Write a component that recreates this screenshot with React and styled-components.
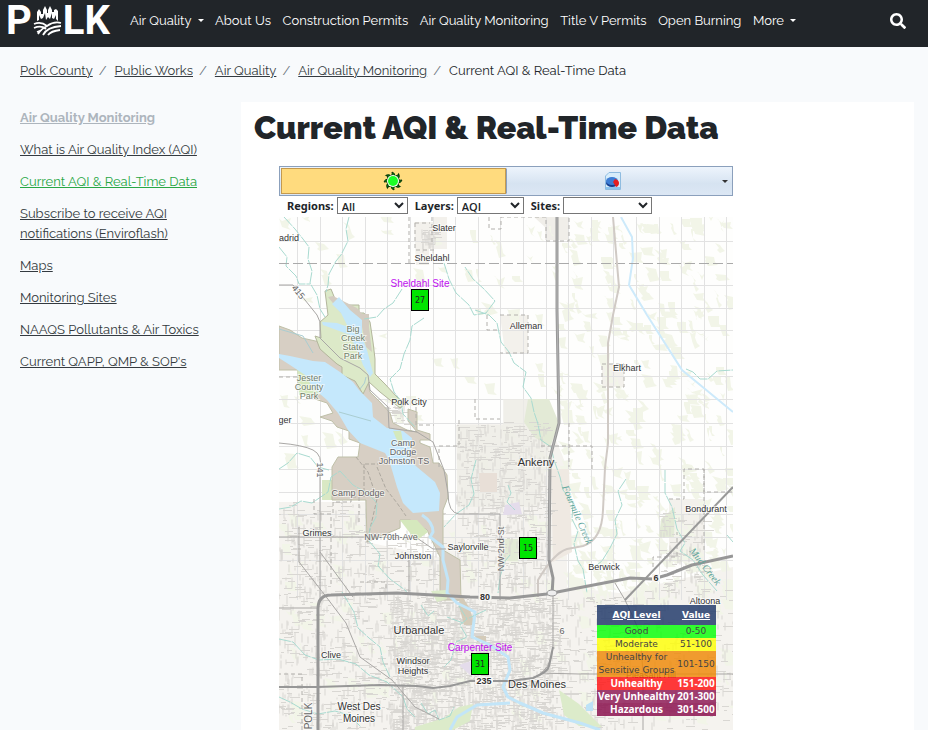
import { useState } from "react";
import styled, { createGlobalStyle } from "styled-components";
import { FaSearch } from "react-icons/fa";

const navItems = [
  { name: "Air Quality", menu: true },
  { name: "About Us" },
  { name: "Construction Permits" },
  { name: "Air Quality Monitoring" },
  { name: "Title V Permits" },
  { name: "Open Burning" },
  { name: "More", menu: true },
];

const crumbs = ["Polk County", "Public Works", "Air Quality", "Air Quality Monitoring"];

const sideLinks = [
  { name: "Air Quality Monitoring", type: "parent" },
  { name: "What is Air Quality Index (AQI)" },
  { name: "Current AQI & Real-Time Data", type: "active" },
  { name: "Subscribe to receive AQI notifications (Enviroflash)" },
  { name: "Maps" },
  { name: "Monitoring Sites" },
  { name: "NAAQS Pollutants & Air Toxics" },
  { name: "Current QAPP, QMP & SOP's" },
];

const sites = [
  { value: 27, name: "Sheldahl Site", x: 132, y: 72 },
  { value: 15, x: 240, y: 320 },
  { value: 31, name: "Carpenter Site", x: 192, y: 436 },
];

const levels = [
  { name: "Good", value: "0-50", bg: "rgba(0, 255, 0, 0.8)" },
  { name: "Moderate", value: "51-100", bg: "rgba(255, 255, 0, 0.8)" },
  { name: "Unhealthy for\nSensitive Groups", value: "101-150", bg: "rgba(238, 138, 10, 0.84)" },
  { name: "Unhealthy", value: "151-200", bg: "rgba(255, 20, 20, 0.84)", light: true },
  { name: "Very Unhealthy", value: "201-300", bg: "rgba(143, 30, 90, 0.86)", light: true },
  { name: "Hazardous", value: "301-500", bg: "rgba(140, 20, 80, 0.86)", light: true },
];

const places = [
  { text: "Slater", x: 165, y: 14 },
  { text: "adrid", x: 10, y: 24 },
  { text: "Sheldahl", x: 153, y: 44 },
  { text: "Alleman", x: 247, y: 112 },
  { text: "Elkhart", x: 348, y: 154 },
  { text: "Polk City", x: 130, y: 188 },
  { text: "ger", x: 6, y: 206 },
  { text: "Big", x: 74, y: 115, park: true },
  { text: "Creek", x: 74, y: 124, park: true },
  { text: "State", x: 74, y: 133, park: true },
  { text: "Park", x: 74, y: 142, park: true },
  { text: "Jester", x: 30, y: 164, park: true },
  { text: "County", x: 30, y: 173, park: true },
  { text: "Park", x: 30, y: 182, park: true },
  { text: "Camp", x: 124, y: 229, muted: true },
  { text: "Dodge", x: 124, y: 238, muted: true },
  { text: "Johnston TS", x: 125, y: 247, muted: true },
  { text: "Camp Dodge", x: 79, y: 279, muted: true },
  { text: "Ankeny", x: 257, y: 249, size: 11 },
  { text: "Bondurant", x: 427, y: 295 },
  { text: "Grimes", x: 38, y: 319 },
  { text: "NW-70th-Ave", x: 112, y: 323, muted: true },
  { text: "Saylorville", x: 189, y: 333 },
  { text: "Johnston", x: 134, y: 342 },
  { text: "Berwick", x: 325, y: 353 },
  { text: "Altoona", x: 426, y: 387 },
  { text: "Urbandale", x: 140, y: 417, size: 11 },
  { text: "Clive", x: 52, y: 441 },
  { text: "Windsor", x: 134, y: 447 },
  { text: "Heights", x: 134, y: 457 },
  { text: "Des Moines", x: 258, y: 471, size: 11 },
  { text: "West Des", x: 80, y: 493, size: 10 },
  { text: "Moines", x: 80, y: 505, size: 10 },
  { text: "Pleasant Hill", x: 372, y: 461 },
];

const creeks = [
  "M5 0 16 12 24 22 30 30 29 42 33 54 31 66 38 78 41 92 46 100",
  "M0 30 8 40 7 49 17 59 20 67 31 67",
  "M70 0 67 12 69 24 62 38 57 44 50 57 49 68 47 75",
  "M165 46 170 62 177 76 190 88 195 98 207 96 216 84 205 72 194 62 186 50",
  "M123 72 114 86 105 92 98 100 85 102",
  "M145 101 133 109 131 123 125 137 121 152 111 162 115 175 122 184 124 197 136 210",
  "M196 93 210 98 218 106 222 125 230 135 235 146 247 155 244 170 252 181 255 195 259 207 262 223 272 230 275 243 281 260 284 273 294 286 293 302 299 314 295 327 299 344 304 352 308 376",
  "M0 292 12 290 22 284 33 286 49 275 52 260 61 254 74 268 88 276 98 286 97 300 91 311 90 324 101 337 99 349 111 362 126 373 130 378",
  "M0 252 9 246 18 236 31 240 39 250 50 253",
  "M347 262 339 274 343 288 336 303 338 317 331 331 323 344 314 351",
  "M386 253 386 276 393 290 398 312 406 326 401 334 414 343 424 358 438 374",
  "M407 152 414 155 421 162 429 162 438 154 454 153",
  "M0 422 14 425 26 438 40 443 59 442 77 447 90 458 108 465 124 480 128 492 136 500",
  "M63 375 75 395 79 411 90 421 101 430 104 445 111 460",
  "M197 243 192 262 195 277 190 288 177 297 165 310",
  "M180 389 188 402 181 408 188 420 177 425 172 443 165 450",
  "M142 388 149 399 155 394 M207 393 190 401 M184 406 168 400",
  "M142 486 149 497 156 493 160 503 171 499 175 490",
  "M229 268 232 276 228 285 236 293 M448 318 454 325",
  "M231 338 226 344 221 360 219 376",
  "M0 480 11 485 23 492 39 497 56 494 70 498 82 510",
];

const roads = [
  "M0 226Q24 228 34 233T41 253V383",
  "M0 68H14L38 98 41 105V121L61 141 81 151 89 158 91 173 109 190 110 211 138 215 154 225 165 253 169 276Q169 296 180 297H221V383",
  "M0 320H88L138 321 154 332H167",
  "M130 343V376 M124 468V513",
  "M454 270 346 383 336 366",
  "M346 383 354 400 361 416 364 456V513",
  "M261 456 300 457H454",
  "M274 373V430Q273 453 254 461",
  "M0 391H39 M41 335 74 380",
  "M20 310V345L45 377 67 406 81 440 113 463 136 490 160 502",
];

// small linear generator so the street and field texture stays the same on every render
const makeRandom = (seed) => () => {
  seed = (seed * 16807) % 2147483647;
  return seed / 2147483647;
};

const makeStreets = (seed, [x, y, w, h], count) => {
  const rand = makeRandom(seed);
  let d = "";
  for (let i = 0; i < count; i++) {
    const px = Math.round(x + rand() * w);
    const py = Math.round(y + rand() * h);
    const length = Math.round(2 + rand() * 9);
    d += `M${px} ${py + 0.5}${rand() > 0.5 ? "h" : "v"}${length}`;
  }
  return d;
};

const makeFields = (seed, [x, y, w, h], count) => {
  const rand = makeRandom(seed);
  let d = "";
  for (let i = 0; i < count; i++) {
    const px = Math.round(x + rand() * w);
    const py = Math.round(y + rand() * h);
    const a = Math.round(2 + rand() * 10);
    const b = Math.round(2 + rand() * 9);
    const c = Math.round(rand() * 6 - 3);
    d += `M${px} ${py}l${a} ${c} ${c} ${b} 3 3-${a} ${c}-3-${b} ${c}-2z`;
  }
  return d;
};

const fields =
  makeFields(77, [275, 0, 174, 390], 330) + makeFields(19, [0, 0, 270, 240], 60) + makeFields(31, [0, 290, 454, 213], 170);

const streets = [
  makeStreets(11, [178, 205, 92, 165], 700),
  makeStreets(42, [110, 380, 165, 133], 2100),
  makeStreets(8, [0, 285, 160, 228], 1200),
  makeStreets(93, [275, 380, 80, 133], 320),
  makeStreets(54, [380, 290, 45, 85], 140),
  makeStreets(29, [95, 185, 30, 28], 60),
  makeStreets(67, [142, 10, 14, 18], 45),
  makeStreets(71, [350, 370, 104, 143], 200),
].join("");

const columns = Array.from({ length: 20 }, (_, i) => Math.round(18 + i * 22.6));
const rows = [24, 68, 91, 113, 136, 159, 182, 206, 229, 252, 275, 297, 320, 343];

const MapDrawing = () => (
  <MapSvg viewBox="0 0 454 513" preserveAspectRatio="xMinYMin slice" aria-hidden="true">
    <rect width="454" height="513" fill="#fefefd" />
    <path
      d="M178 206H225V182H270V206L288 250V370L340 376 454 350V513H0V285H87V325L160 340V303H178Z"
      fill="#f5f3ef"
    />
    <path d="M135 5H155V0H168V32H150V48H137Z M221 98H249V136H226Z M323 147H345V170H323Z M390 282H425V345H390Z" fill="#f3f1ec" />
    <path d="M255 0H290V23H266V10Z" fill="#f0eee9" />
    <path d={fields} fill="#f2f5e8" />
    <path
      d={columns.map((x) => `M${x}.5 0V383`).join("") + rows.map((y) => `M0 ${y}.5H454`).join("")}
      stroke="#e2e2e2"
      fill="none"
    />
    <path d="M177 208H224V182H270V232L260 290H178Z" fill="#eeece7" opacity=".7" />
    <path d="M272 252H290L293 335 274 345Z" fill="#efe9e2" />
    <path d="M249 182H270L280 206 271 230 255 220 245 205Z M221 322H239V344H221Z M382 302 396 290 395 320H380Z" fill="#e3ead6" />
    <path d="M43 263H53V283H43Z M118 213H133V225H124Z" fill="#d9e8c4" />
    <path d={streets} stroke="#d9d7d3" fill="none" />
    <path d="M200 256H218V275H201Z" fill="#e8dfd7" />
    <path d="M226 288 240 285 243 297 224 298Z M180 448 195 443 191 458Z" fill="#e4dceb" />

    {/* park land and reservoir */}
    <path
      d="M0 109 11 113 23 121 41 125 53 138 68 148 78 153 89 165 91 175 101 185 111 196 114 206 128 213 138 215 129 204V192L138 195V213L151 217V223H141L141 226 151 230 154 246 160 246 168 258 169 280 164 293V333L181 343 182 383H161V340L148 313 131 303H121V311L88 325 87 283H53V250L59 240H79L81 226 70 222V214L58 210 53 204 41 200 54 196 48 186 36 182 31 176 19 166V153H0Z"
      fill="#d7cfc4"
      stroke="#bfc0a8"
    />
    <path
      d="M46 74 52 72 56 82 70 88H80V96H85L91 105 94 125 96 142V157L106 167 118 180 126 187 121 191 101 175 90 165 84 177 76 164 63 158V150L58 147 41 132 36 119 42 121 41 105 49 98Z"
      fill="#dce9c8"
      stroke="#b3b69c"
    />
    <path d="M18 147 35 155 55 176 34 178 20 178Z M121 303 138 303 149 315 137 324Z" fill="#d5e8bd" />
    <path d="M78 91 83 97H90V110L93 135 87 130 83 110 72 100 62 96 49 80 54 79Z" fill="#d4ccc1" />
    <path d="M53 87 60 80 71 93 83 103V120L88 133 94 156 91 160 84 148 81 140 71 118 44 108 43 105 58 106 69 110 62 96Z" fill="#c4e7fb" />
    <path
      d="M0 137 11 139 34 144 46 145 61 155 74 165 80 173 93 186 94 200 108 211 124 214 133 221 131 243 138 250 156 265 161 276 160 294 134 296 124 286 118 270 113 253 110 243 106 236 81 226 69 213 59 196 48 183 34 171 26 158 11 148 0 141Z"
      fill="#c5e8fc"
    />
    <path d="M114 214H122L124 225 120 228Z" fill="#d4e9bd" />
    <path d="M81 172Q87 166 87 160 M60 195 92 204 M0 112 24 119 34 136" stroke="#aacdd1" fill="none" />
    <path d="M86 247H99M85 247V280M98 250 107 272 118 286 127 299 M77 240 89 255 98 282 88 325" stroke="#ada89f" fill="none" strokeDasharray="4 2" />
    <path d="M181 376 190 390 196 408H185L180 389Z M196 419H207V425H198Z" fill="#d4cbb9" />
    <path d="M152 374 167 373 168 382 158 385Z M136 510 165 501 180 490 194 487 191 504 174 513H136Z" fill="#dcebca" />
    <path d="M280 473 300 487 323 510 300 509 285 498Z" fill="#dcebca" />
    <path
      d="M143 298Q154 305 154 315L151 320 164 330V343L169 363 168 376 178 386 196 395 193 420 211 428 229 440 231 453 224 470 229 480 241 486 264 496 301 506 321 513 M171 513 178 500 198 488 231 486"
      stroke="#c2e5f8"
      strokeWidth="3"
      fill="none"
      strokeLinejoin="round"
    />
    <path d="M342 0 353 20 354 41 350 68 368 98 403 153 454 195" stroke="#cdeafb" strokeWidth="2" fill="none" />
    <path d="M307 488 314 484V494H307Z" fill="#bde2f6" />
    {creeks.map((d) => (
      <path key={d} d={d} stroke="#a8dad0" fill="none" strokeLinejoin="round" strokeDasharray="12 1" />
    ))}

    {/* county and city limits */}
    <path d="M0 46.5H454" stroke="#aaa" strokeDasharray="10 4" />
    <path
      d="M130 0V46 M136 6H151M136 6V33H158 M153 25V0 M210 0V12H222V0H267V24H290V0 M221 98H249V136H221 M323 147H345V170H323Z M137 183V208H155M180 203V229H160V250 M290 206V250M262 229H313V252M425 252V336M390 282H405V252H425V275H454 M35 282V297H54V285H72V280H80V305M52 300V370M81 365H107V373M374 350V340H398V315M23 513V457H0 M208 98V113H221 M196 182V202H221 M0 160H20"
      stroke="#b2b0ac"
      strokeDasharray="4 3"
      fill="none"
    />

    {roads.map((d) => (
      <path key={d} d={d} stroke="#a9a7a5" fill="none" strokeLinejoin="round" />
    ))}
    <path
      d="M334 0 340 70 334 98 329 126V226L326 251 324 293Q323 323 304 329L288 332Q275 336 259 363V380"
      stroke="#d0cac5"
      strokeWidth="2"
      fill="none"
    />
    <path d="M454 270 346 383" stroke="#999" strokeWidth="2" />
    <path
      d="M278 0V93L280 206 271 241 270 343 274 361 273 378 M39 513V392Q39 378 52 378L118 376 191 380 231 381 268 377 304 370 351 361 374 362 388 358 413 348 454 339"
      stroke="#979797"
      strokeWidth="3"
      fill="none"
      strokeLinejoin="round"
    />
    <path
      d="M0 470H38L101 468 138 469 154 471 171 469 191 464H231L254 461Q269 455 270 449L274 430"
      stroke="#979797"
      strokeWidth="2"
      fill="none"
    />
    <path d="M278 0V93L280 206 271 241 270 343" stroke="#b3b3b3" fill="none" />
    <ellipse cx="273" cy="376" rx="5" ry="3" fill="#eee" stroke="#979797" />

    {[
      ["80", 206, 380, 13],
      ["235", 205, 464, 18],
      ["6", 377, 361, 8],
    ].map(([text, x, y, w]) => (
      <g key={text}>
        <rect x={x - w / 2} y={y - 4} width={w} height="8" fill="#f5f3ef" />
        <Place x={x} y={y + 3} $bold>
          {text}
        </Place>
      </g>
    ))}
    <Place x="283" y="417" $muted>6</Place>
    {places.map((place) => (
      <Place key={place.text + place.y} x={place.x} y={place.y} $size={place.size} $park={place.park} $muted={place.muted}>
        {place.text}
      </Place>
    ))}
    <Place x="0" y="0" transform="translate(17 77) rotate(50)" $muted>415</Place>
    <Place x="0" y="0" transform="translate(38 253) rotate(90)" $muted>141</Place>
    <Place x="0" y="0" transform="translate(225 332) rotate(-90)" $muted>NW-2nd-St</Place>
    <Place x="0" y="0" transform="translate(33 499) rotate(-90)" $size={10} $muted>POLK</Place>
    <Creek transform="translate(283 270) rotate(67)">Fourmile Creek</Creek>
    <Creek transform="translate(410 334) rotate(52)">Mud Creek</Creek>
  </MapSvg>
);

const Logo = () => (
  <LogoLink href="#home" aria-label="Polk County home">
    <span>P</span>
    <svg width="31" height="30" viewBox="0 0 31 30" aria-hidden="true">
      <path
        d="M5 15V6L7 3 9 6V8H11V4L13 0 15 4V7H16V4L18 0 20 4V6H22V4L24 3 26 5V15L24 13V9L22 13 20 12V7L18 13 16 11 14 14 13 7 11 12 9 13 7 9V14Z"
        fill="#fff"
      />
      <path
        d="M2 18Q9 15 15 20 22 15 29 17 M2 22Q9 19 14 23 M5 26 10 24 M15 20Q9 23 6 28 M29 20Q15 21 11 29 M28 24Q19 25 16 29"
        fill="none"
        stroke="#fff"
        strokeWidth="1.8"
      />
    </svg>
    <span>LK</span>
  </LogoLink>
);

const SunIcon = () => (
  <svg width="20" height="20" viewBox="0 0 20 20" aria-hidden="true">
    {[0, 45, 90, 135, 180, 225, 270, 315].map((angle) => (
      <path key={angle} d="M8 5Q10 3 9 1 12 2 12 5z" fill="#087a12" stroke="#063507" transform={`rotate(${angle} 10 10)`} />
    ))}
    <circle cx="10" cy="10" r="6" fill="#fff" />
    <circle cx="10" cy="10" r="5" fill="#1cff25" />
  </svg>
);

const ChartIcon = () => (
  <svg width="16" height="18" viewBox="0 0 16 18" aria-hidden="true">
    <path d="M4 0.5H15.5V17.5H0.5V4Z" fill="#d7edfb" stroke="#8fbce0" />
    <path d="M1 15H15V17H1Z" fill="#8cc4ee" />
    <ellipse cx="7" cy="11" rx="6" ry="4" fill="#153f91" />
    <ellipse cx="7" cy="9" rx="6" ry="4" fill="#3d7dd5" />
    <path d="M8 10 10 7Q14 8 14 11T11 15Z" fill="#e41d20" />
  </svg>
);

const App = () => {
  const [region, setRegion] = useState("All");
  const [layer, setLayer] = useState("AQI");
  const [site, setSite] = useState("");

  return (
    <Page>
      <GlobalStyle />
      <Header>
        <Logo />
        <Nav aria-label="Main">
          {navItems.map((item) => (
            <NavLink key={item.name} href="#nav">
              {item.name}
              {item.menu && <Caret />}
            </NavLink>
          ))}
        </Nav>
        <SearchButton aria-label="Search">
          <FaSearch size={16} />
        </SearchButton>
      </Header>

      <Breadcrumb aria-label="Breadcrumb">
        {crumbs.map((name) => (
          <li key={name}>
            <a href="#crumb">{name}</a>
          </li>
        ))}
        <li>Current AQI &amp; Real-Time Data</li>
      </Breadcrumb>

      <Columns>
        <Sidebar>
          {sideLinks.map((link) => (
            <SideLink key={link.name} href="#side" $type={link.type}>
              {link.name}
            </SideLink>
          ))}
        </Sidebar>

        <Content>
          <Title>Current AQI &amp; Real-Time Data</Title>
          <Widget>
            <Toolbar>
              <ToolButton $active aria-label="Current AQI">
                <SunIcon />
              </ToolButton>
              <ToolButton aria-label="Charts">
                <ChartIcon />
                <MenuArrow />
              </ToolButton>
            </Toolbar>
            <Filters>
              <label htmlFor="regions">Regions:</label>
              <Select id="regions" $width={71} value={region} onChange={(e) => setRegion(e.target.value)}>
                <option>All</option>
              </Select>
              <label htmlFor="layers">Layers:</label>
              <Select id="layers" $width={67} value={layer} onChange={(e) => setLayer(e.target.value)}>
                <option>AQI</option>
              </Select>
              <label htmlFor="sites">Sites:</label>
              <Select id="sites" $width={89} value={site} onChange={(e) => setSite(e.target.value)}>
                <option value=""></option>
                <option>Sheldahl Site</option>
                <option>Carpenter Site</option>
              </Select>
            </Filters>
            <MapArea>
              <MapDrawing />
              {sites.map((pin) => (
                <Pin key={pin.value} style={{ left: pin.x, top: pin.y }}>
                  {pin.name && <PinName>{pin.name}</PinName>}
                  {pin.value}
                </Pin>
              ))}
              <Legend>
                <thead>
                  <tr>
                    <th>AQI Level</th>
                    <th>Value</th>
                  </tr>
                </thead>
                <tbody>
                  {levels.map((level) => (
                    <LevelRow key={level.name} $bg={level.bg} $light={level.light}>
                      <td>{level.name}</td>
                      <td>{level.value}</td>
                    </LevelRow>
                  ))}
                </tbody>
              </Legend>
            </MapArea>
          </Widget>
        </Content>
      </Columns>
    </Page>
  );
};

export default App;

const GlobalStyle = createGlobalStyle`
  * {
    box-sizing: border-box;
  }

  body {
    margin: 0;
    background: #f8fafc;
    color: #212529;
    font-family: Raleway, Lato, sans-serif;
    font-size: 13px;
    line-height: 20px;
  }
`;

const Page = styled.div`
  min-height: 100vh;
  display: flex;
  flex-direction: column;
`;

const Header = styled.header`
  display: flex;
  align-items: center;
  height: 47px;
  padding: 0 22px 6px 6px;
  background: #212529;
`;

const LogoLink = styled.a`
  display: flex;
  align-items: center;
  width: 124px;
  color: #fff;
  font: bold 40px/40px Roboto, sans-serif;
  text-decoration: none;
`;

const Nav = styled.nav`
  display: flex;
  flex: 1;
  justify-content: space-between;
  max-width: 666px;
`;

const NavLink = styled.a`
  display: flex;
  align-items: center;
  gap: 6px;
  color: #fff;
  text-decoration: none;
  white-space: nowrap;
`;

const Caret = styled.span`
  border: 3px solid transparent;
  border-top-color: #fff;
  border-bottom: 0;
`;

const SearchButton = styled.button`
  display: flex;
  margin-left: auto;
  padding: 0;
  border: none;
  background: none;
  color: #fff;
`;

const Breadcrumb = styled.ol`
  display: flex;
  margin: 0;
  padding: 14px 20px 21px;
  list-style: none;

  li + li::before {
    content: "/";
    padding: 0 8px 0 6px;
    color: #6c757d;
  }

  a {
    color: #343a40;
  }
`;

const Columns = styled.div`
  display: flex;
  flex: 1;
  padding: 0 14px 0 20px;
`;

const Sidebar = styled.nav`
  display: flex;
  flex-direction: column;
  align-items: flex-start;
  gap: 12px;
  width: 221px;
  padding: 6px 40px 0 0;
`;

const SideLink = styled.a`
  color: ${({ $type }) => ($type === "active" ? "#28a745" : $type === "parent" ? "#adb5bd" : "#343a40")};
  font-weight: ${({ $type }) => ($type === "parent" ? 700 : 400)};
`;

const Content = styled.main`
  display: flex;
  flex: 1;
  flex-direction: column;
  min-width: 0;
  padding: 8px 13px 0;
  background: #fff;
`;

const Title = styled.h1`
  margin: 0 0 20px;
  font-size: 32px;
  font-weight: 900;
  line-height: 36px;
`;

const Widget = styled.section`
  display: flex;
  flex: 1;
  flex-direction: column;
  max-width: 479px;
  padding-left: 25px;
`;

const Toolbar = styled.div`
  display: grid;
  grid-template-columns: 1fr 1fr;
  height: 30px;
  padding: 1px;
  border: 1px solid #8ba0bc;
  background: linear-gradient(#edf4fc, #d6e3f1 60%, #dce7f4);
`;

const ToolButton = styled.button`
  position: relative;
  display: flex;
  align-items: center;
  justify-content: center;
  padding: 0 ${({ $active }) => ($active ? 2 : 12)}px 0 0;
  border: 1px solid ${({ $active }) => ($active ? "#c59a4e" : "transparent")};
  border-left-color: ${({ $active }) => ($active ? "#c59a4e" : "#8ba0bc")};
  background: ${({ $active }) => ($active ? "#ffdb7e" : "transparent")};
`;

const MenuArrow = styled.span`
  position: absolute;
  right: 2px;
  border: 3px solid transparent;
  border-top-color: #333;
  border-bottom: 0;
`;

const Filters = styled.div`
  display: flex;
  align-items: center;
  height: 21px;
  padding: 0 8px 3px;
  font: bold 11px/15px "Noto Sans", sans-serif;

  label {
    margin-right: 3px;
  }
`;

const Select = styled.select`
  width: ${({ $width }) => $width}px;
  height: 17px;
  margin-right: 7px;
  padding: 0;
  border: 1px solid #767676;
  border-radius: 0;
  background: #fff;
  color: #212529;
  font: 600 11px/15px "Open Sans", sans-serif;
`;

const MapArea = styled.div`
  position: relative;
  flex: 1;
  min-height: 513px;
  overflow: hidden;
`;

const MapSvg = styled.svg`
  position: absolute;
  width: 100%;
  height: 100%;
`;

const Place = styled.text`
  fill: ${({ $park, $muted }) => ($park ? "#71806b" : $muted ? "#666" : "#333")};
  font-family: "Liberation Sans", Arial, sans-serif;
  font-size: ${({ $size }) => $size || 9}px;
  font-weight: ${({ $bold }) => ($bold ? 700 : 400)};
  text-anchor: middle;
  paint-order: stroke;
  stroke: rgba(255, 255, 255, 0.6);
  stroke-width: 2px;
`;

const Creek = styled.text`
  fill: #5fa59b;
  font: italic 10px "Liberation Serif", serif;
`;

const Pin = styled.button`
  position: absolute;
  width: 18px;
  height: 22px;
  padding: 0;
  border: 1px solid #000;
  background: #00e400;
  color: #222;
  font: 8px "DejaVu Sans", sans-serif;
`;

const PinName = styled.span`
  position: absolute;
  bottom: 20px;
  left: 50%;
  transform: translateX(-50%);
  color: #c010f0;
  font: 10px/12px "Liberation Sans", Arial, sans-serif;
  white-space: nowrap;
`;

const Legend = styled.table`
  position: absolute;
  right: 17px;
  bottom: 14px;
  width: 119px;
  table-layout: fixed;
  border-collapse: collapse;
  font: 9px/13px "DejaVu Sans", Verdana, sans-serif;
  text-align: center;
  white-space: pre;

  th,
  td {
    padding: 0;
  }

  th {
    height: 20px;
    background: rgba(38, 62, 110, 0.86);
    color: #fff;
    text-decoration: underline;
  }

  th:first-child {
    width: 79px;
  }
`;

const LevelRow = styled.tr`
  background: ${({ $bg }) => $bg};
  color: ${({ $light }) => ($light ? "#fff" : "#444")};
  font: ${({ $light }) => ($light ? 'bold 10px/13px "Noto Sans", sans-serif' : "inherit")};
`;
